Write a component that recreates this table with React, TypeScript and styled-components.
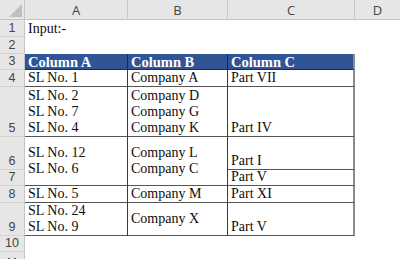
import * as React from "react";
import styled, { createGlobalStyle, css } from "styled-components";

const GlobalStyle = createGlobalStyle`
  html, body {
    margin: 0;
    padding: 0;
    background: #ffffff;
    overflow: hidden;
  }
`;

const colWidths = [25, 103, 100, 127];
const rowHeights = [20, 17, 17, 16, 17, 50, 33, 16, 17, 33, 16];

const Sheet = styled.div`
  display: grid;
  grid-template-columns: ${colWidths.map((w) => `${w}px`).join(" ")} 1fr;
  grid-template-rows: ${rowHeights.map((h) => `${h}px`).join(" ")} 20px;
  width: 400px;
  height: 259px;
  overflow: hidden;
  background: #ffffff;
`;

const Corner = styled.div`
  grid-row: 1;
  grid-column: 1;
  background: #e6e6e6;
  border-right: 1px solid #c4c4c4;
  border-bottom: 1px solid #c4c4c4;
  box-sizing: border-box;
  display: flex;
  align-items: flex-end;
  justify-content: flex-end;
  padding: 0 2px 2px 0;

  & > svg {
    display: block;
  }
`;

const ColHead = styled.div<{ $col: number; $last?: boolean }>`
  grid-row: 1;
  grid-column: ${(p) => p.$col};
  background: #e6e6e6;
  border-bottom: 1px solid #c4c4c4;
  border-right: ${(p) => (p.$last ? "none" : "1px solid #c8c8c8")};
  box-sizing: border-box;
  display: flex;
  align-items: center;
  justify-content: center;
  font-family: "Open Sans", "Liberation Sans", sans-serif;
  font-size: 13px;
  color: #444444;
  padding-top: 1px;
`;

const RowHead = styled.div<{ $row: number }>`
  grid-row: ${(p) => p.$row};
  grid-column: 1;
  background: #e6e6e6;
  border-right: 1px solid #c4c4c4;
  border-bottom: 1px solid #d2d2d2;
  box-sizing: border-box;
  display: flex;
  align-items: flex-end;
  justify-content: center;
  font-family: "Liberation Sans", Arial, sans-serif;
  font-size: 12.5px;
  line-height: 14px;
  padding-bottom: 1px;
  color: #444444;
`;

type Kind = "plain" | "head" | "body";

const Cell = styled.div<{
  $row: number;
  $col: number;
  $span?: number;
  $kind?: Kind;
  $align?: "bottom" | "center";
  $edge?: boolean;
}>`
  grid-row: ${(p) => p.$row} / span ${(p) => p.$span ?? 1};
  grid-column: ${(p) => p.$col};
  box-sizing: border-box;
  display: flex;
  flex-direction: column;
  justify-content: ${(p) => (p.$align === "center" ? "center" : "flex-end")};
  padding: 0 3px;
  font-family: "Liberation Serif", "Times New Roman", serif;
  font-size: 14px;
  line-height: 16px;
  color: #0d0d0d;
  white-space: nowrap;
  overflow: hidden;

  ${(p) =>
    p.$kind === "head" &&
    css`
      background: #2f5597;
      color: #ffffff;
      font-weight: bold;
      font-size: 14.5px;
      border-bottom: 1px solid #2a2a2a;
      border-right: ${p.$edge ? "2px solid #8c8c8c" : "1px solid #2a2a2a"};
    `}

  ${(p) =>
    p.$kind === "body" &&
    css`
      border-bottom: 1px solid #555555;
      border-right: ${p.$edge ? "2px solid #8c8c8c" : "1px solid #3a3a3a"};
    `}
`;

const Line = styled.span`
  display: block;
`;

type Entry = { row: number; col: number; span?: number; lines: string[]; align?: "bottom" | "center" };

const body: Entry[] = [
  { row: 5, col: 2, lines: ["SL No. 1"] },
  { row: 5, col: 3, lines: ["Company A"] },
  { row: 5, col: 4, lines: ["Part VII"] },
  { row: 6, col: 2, lines: ["SL No. 2", "SL No. 7", "SL No. 4"] },
  { row: 6, col: 3, lines: ["Company D", "Company G", "Company K"] },
  { row: 6, col: 4, lines: ["Part IV"] },
  { row: 7, col: 2, span: 2, lines: ["SL No. 12", "SL No. 6"], align: "center" },
  { row: 7, col: 3, span: 2, lines: ["Company L", "Company C"], align: "center" },
  { row: 7, col: 4, lines: ["Part I"] },
  { row: 8, col: 4, lines: ["Part V"] },
  { row: 9, col: 2, lines: ["SL No. 5"] },
  { row: 9, col: 3, lines: ["Company M"] },
  { row: 9, col: 4, lines: ["Part XI"] },
  { row: 10, col: 2, lines: ["SL No. 24", "SL No. 9"] },
  { row: 10, col: 3, lines: ["Company X"], align: "center" },
  { row: 10, col: 4, lines: ["Part V"] },
];

export default function App() {
  return (
    <>
      <GlobalStyle />
      <Sheet>
        <Corner>
          <svg width="13" height="13" viewBox="0 0 13 13">
            <polygon points="13,0 13,13 0,13" fill="#bfbfbf" />
          </svg>
        </Corner>
        {["A", "B", "C", "D"].map((l, i) => (
          <ColHead key={l} $col={i + 2} $last={i === 3}>
            {l}
          </ColHead>
        ))}
        {Array.from({ length: 11 }, (_, i) => (
          <RowHead key={i} $row={i + 2}>
            {i + 1}
          </RowHead>
        ))}

        <Cell $row={2} $col={2}>
          <Line>Input:-</Line>
        </Cell>

        {["Column A", "Column B", "Column C"].map((h, i) => (
          <Cell key={h} $row={4} $col={i + 2} $kind="head" $edge={i === 2} $align="center">
            <Line>{h}</Line>
          </Cell>
        ))}

        {body.map((e) => (
          <Cell
            key={`${e.row}-${e.col}`}
            $row={e.row}
            $col={e.col}
            $span={e.span}
            $kind="body"
            $align={e.align}
            $edge={e.col === 4}
          >
            {e.lines.map((t) => (
              <Line key={t}>{t}</Line>
            ))}
          </Cell>
        ))}
      </Sheet>
    </>
  );
}
